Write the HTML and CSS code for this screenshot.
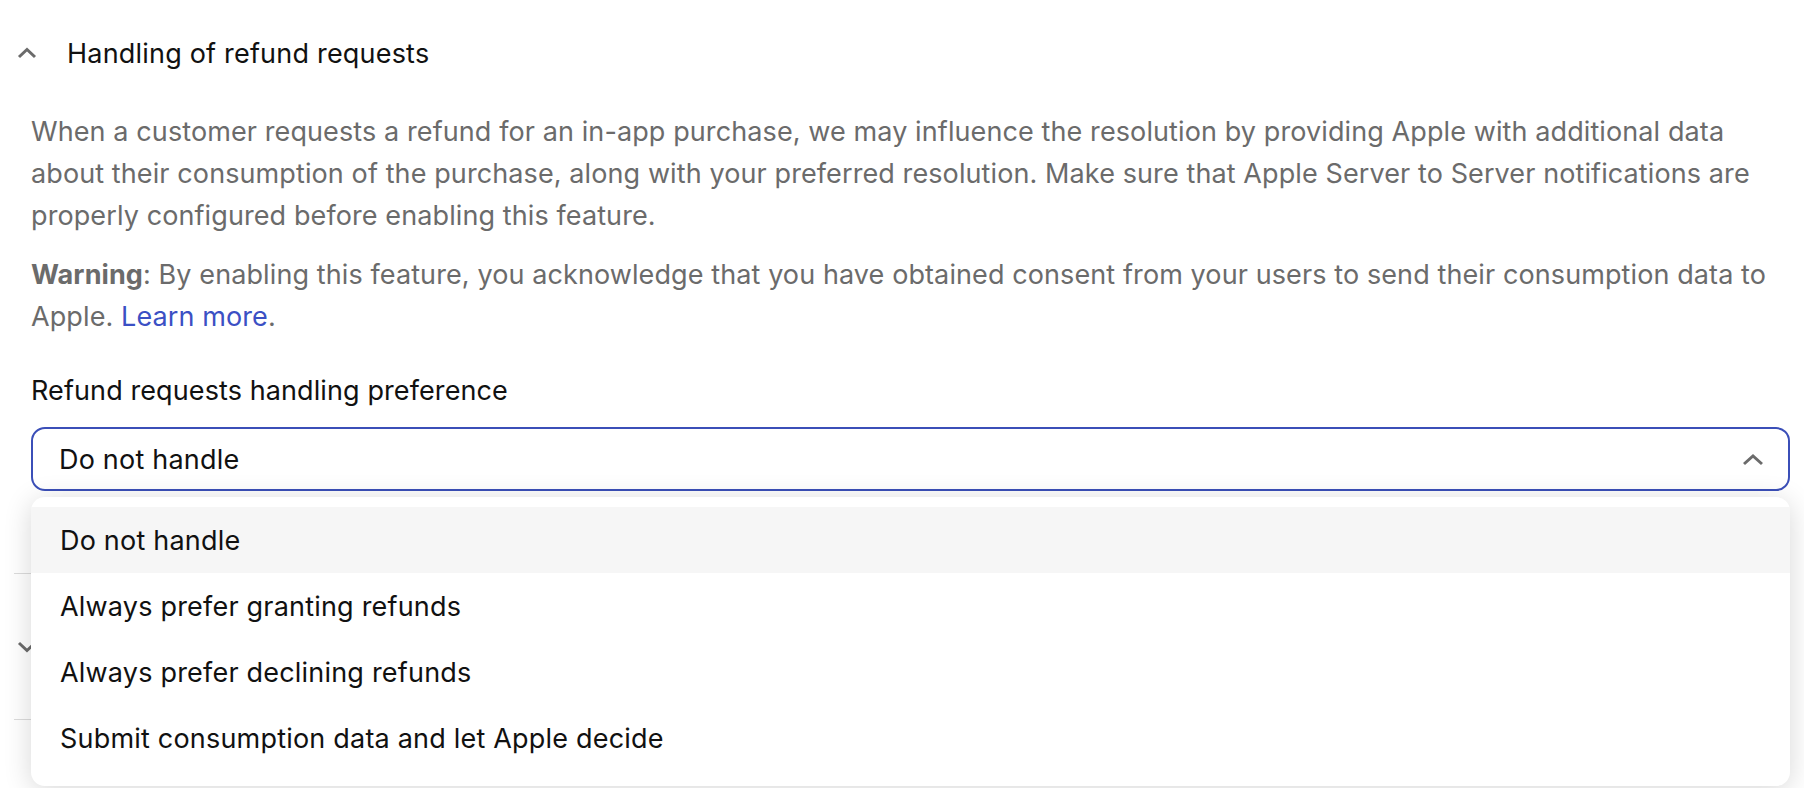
FILE: index.html
```html
<!DOCTYPE html>
<html lang="en">

<head>
    <meta charset="UTF-8" />
    <meta name="viewport" content="width=device-width, initial-scale=1.0" />
    <title>refund requests</title>
    <link rel="stylesheet" href="styles.css">
</head>

<body>

    <div class="settings">
        <section class="panel">
            <div class="panel_head">
                <svg class="chevron" width="20" height="12" viewBox="0 0 20 12">
                    <path d="M2 10 L10 2.5 L18 10" />
                </svg>
                <span class="panel_title">Handling of refund requests</span>
            </div>
            <div class="panel_body">
                <p class="hint">When a customer requests a refund for an in-app purchase, we may influence the resolution by providing Apple with additional data about their consumption of the purchase, along with your preferred resolution. Make sure that Apple Server to Server notifications are properly configured before enabling this feature.</p>
                <p class="hint"><strong>Warning</strong>: By enabling this feature, you acknowledge that you have obtained consent from your users to send their consumption data to Apple. <a href="#">Learn more</a>.</p>

                <label class="field_label" for="refundPref">Refund requests handling preference</label>
                <div class="select">
                    <div class="select_box" id="refundPref">
                        <span>Do not handle</span>
                        <svg class="chevron" width="22" height="13" viewBox="0 0 22 13">
                            <path d="M2 11 L11 3 L20 11" />
                        </svg>
                    </div>
                    <ul class="select_menu">
                        <li class="option active">Do not handle</li>
                        <li class="option">Always prefer granting refunds</li>
                        <li class="option">Always prefer declining refunds</li>
                        <li class="option">Submit consumption data and let Apple decide</li>
                    </ul>
                </div>
            </div>
        </section>

        <section class="panel collapsed">
            <div class="panel_head">
                <svg class="chevron" width="20" height="12" viewBox="0 0 20 12">
                    <path d="M2 2 L10 9.5 L18 2" />
                </svg>
            </div>
        </section>

        <section class="panel collapsed">
            <div class="panel_head">
                <svg class="chevron" width="20" height="12" viewBox="0 0 20 12">
                    <path d="M2 2 L10 9.5 L18 2" />
                </svg>
            </div>
        </section>
    </div>

</body>

</html>
```

FILE: styles.css
```css
:root {
    --text: #111;
    --muted: #6b6b6b;
    --line: #dcdcdc;
    --accent: #3b4fb8;
    --link: #3b50c4;
    --hover: #f6f6f6;
}

* {
    box-sizing: border-box;
    font-family: 'Inter', 'Noto Sans', sans-serif;
}

body {
    margin: 0;
    padding: 0;
    background-color: #fff;
    color: var(--text);
    height: 100vh;
    overflow: hidden;
}

.settings {
    height: 100vh;
    overflow: hidden;
    padding: 22px 14px 0 14px;
}

.panel {
    border-bottom: 1px solid var(--line);
}

.panel_head {
    display: flex;
    align-items: center;
    gap: 30px;
    height: 62px;
    padding-left: 3px;
}

.panel_title {
    font-size: 27px;
    letter-spacing: 0.2px;
}

.chevron {
    flex-shrink: 0;
}

.chevron path {
    fill: none;
    stroke: var(--muted);
    stroke-width: 3;
}

.collapsed .panel_head {
    height: 145px;
}

.panel_body {
    padding: 27px 0 82px 17px;
}

.hint {
    margin: 0 0 17px;
    font-size: 27px;
    line-height: 42px;
    color: var(--muted);
    letter-spacing: 0.1px;
}

.hint strong {
    font-weight: 700;
}

.hint a {
    color: var(--link);
    text-decoration: none;
}

.field_label {
    display: block;
    margin-top: 32px;
    font-size: 27px;
    line-height: 42px;
    letter-spacing: 0.1px;
}

/* select */

.select {
    position: relative;
    margin-top: 15px;
}

.select_box {
    height: 64px;
    border: 2px solid var(--accent);
    border-radius: 14px;
    display: flex;
    align-items: center;
    justify-content: space-between;
    padding: 0 24px 0 26px;
    font-size: 27px;
    letter-spacing: 0.2px;
}

.select_menu {
    position: absolute;
    top: 70px;
    left: 0;
    right: 0;
    margin: 0;
    padding: 10px 0 15px;
    list-style: none;
    background-color: #fff;
    border-radius: 14px;
    box-shadow: rgba(0, 0, 0, 0.16) 0px 4px 28px;
}

.option {
    height: 66px;
    display: flex;
    align-items: center;
    padding-left: 29px;
    font-size: 27px;
    letter-spacing: 0.2px;
}

.option.active {
    background-color: var(--hover);
}
```
